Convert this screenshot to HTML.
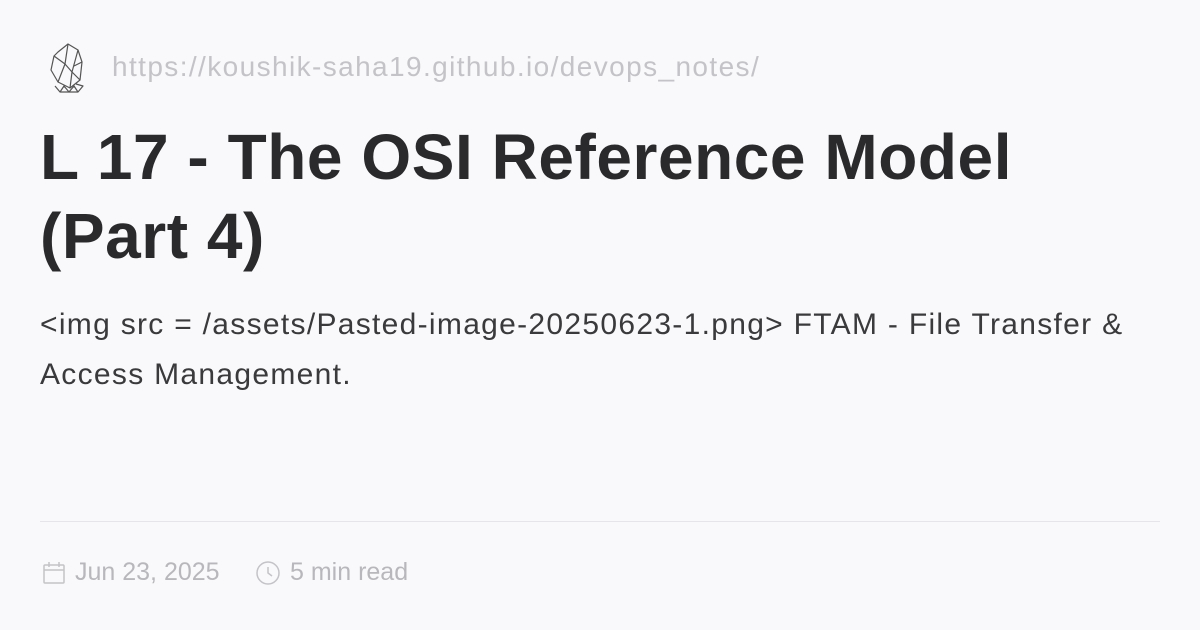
<!DOCTYPE html>
<html><head><meta charset="utf-8"><style>
body{margin:0;width:1200px;height:630px;background:#f9f9fb;font-family:"Liberation Sans",sans-serif;position:relative;overflow:hidden}
.url{position:absolute;left:112px;top:51px;font-size:28px;color:#c4c4c8;letter-spacing:1.4px}
h1{position:absolute;left:40px;top:118px;margin:0;width:1050px;font-size:64px;line-height:79px;font-weight:700;color:#2a2a2c;letter-spacing:0.55px}
p{position:absolute;left:40px;top:300px;margin:0;width:1120px;font-size:30px;line-height:50px;color:#3a3a3c;letter-spacing:1.3px}
.hr{position:absolute;left:40px;top:521px;width:1120px;height:1px;background:#e6e6ea}
.meta{position:absolute;top:558px;font-size:25px;color:#b8b8bc;display:flex;align-items:center;gap:10px}
</style></head><body>
<svg style="position:absolute;left:48px;top:42px" width="40" height="52" viewBox="0 0 40 52" fill="none" stroke="#555" stroke-width="1.2" stroke-linejoin="round">
<path d="M10 10L20 2L30 8L34 20L32 38L22 46L10 40L3 28L6 14Z"/>
<path d="M20 2L17 22L24 30L32 38M17 22L6 14M17 22L10 40M24 30L22 46M30 8L24 30M34 20L26 24"/>
<path d="M7 44L12 50L30 50L35 44L28 42M12 50L16 44L21 50L26 44L30 50"/>
</svg>
<div class="url">https://koushik-saha19.github.io/devops_notes/</div>
<h1>L 17 - The OSI Reference Model (Part 4)</h1>
<p>&lt;img src = /assets/Pasted-image-20250623-1.png&gt; FTAM - File Transfer &amp; Access Management.</p>
<div class="hr"></div>
<div class="meta" style="left:43px">
<svg width="22" height="24" viewBox="0 0 22 24" fill="none" stroke="#c4c4c8" stroke-width="1.5"><rect x="1" y="4" width="20" height="18" rx="1"/><path d="M1 9H21M6 1V6M16 1V6"/></svg>
<span>Jun 23, 2025</span></div>
<div class="meta" style="left:256px">
<svg width="24" height="24" viewBox="0 0 24 24" fill="none" stroke="#c4c4c8" stroke-width="1.5"><circle cx="12" cy="12" r="11"/><path d="M12 6V12L16 15"/></svg>
<span>5 min read</span></div>
</body></html>
